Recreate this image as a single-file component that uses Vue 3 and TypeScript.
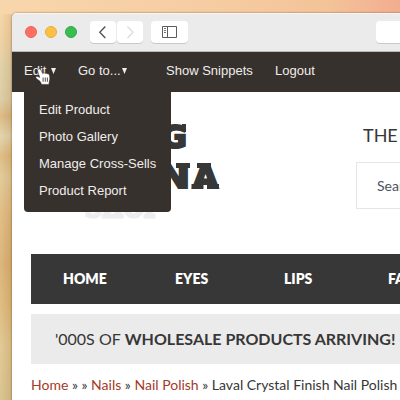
<script setup lang="ts">
interface NavItem { label: string; width: number }

const editMenu: string[] = ['Edit Product', 'Photo Gallery', 'Manage Cross-Sells', 'Product Report']
const nav: NavItem[] = [
  { label: 'HOME', width: 112 },
  { label: 'EYES', width: 109 },
  { label: 'LIPS', width: 104 },
  { label: 'FACE', width: 90 },
]
</script>

<template>
  <div class="desktop">
    <div class="window">
      <header class="chrome">
        <div class="lights">
          <i class="light red"></i><i class="light amber"></i><i class="light green"></i>
        </div>
        <div class="history">
          <button class="tool" aria-label="Back">
            <svg width="26" height="22" viewBox="0 0 26 22"><path d="M15.3 5.5 9.8 11.2l5.5 5.7" fill="none" stroke="#555" stroke-width="1.4" /></svg>
          </button>
          <button class="tool" aria-label="Forward">
            <svg width="26" height="22" viewBox="0 0 26 22"><path d="m10.5 5.5 5.5 5.7-5.5 5.7" fill="none" stroke="#ddd" stroke-width="1.4" /></svg>
          </button>
        </div>
        <button class="tool wide" aria-label="Sidebar">
          <svg width="37" height="22" viewBox="0 0 37 22"><path d="M11.5 5.5h14v11h-14zM16.5 5.5v11" fill="none" stroke="#5c5c5c" /><path d="M13 7.5h2M13 9.5h2M13 11.5h2" stroke="#777" /></svg>
        </button>
        <div class="address"></div>
      </header>

      <div class="admin">
        <a class="edit">Edit</a><span class="caret edit-caret"></span>
        <a class="goto">Go to...</a><span class="caret"></span>
        <a class="snippets">Show Snippets</a>
        <a class="logout">Logout</a>
        <ul class="menu">
          <li v-for="entry in editMenu" :key="entry">{{ entry }}</li>
        </ul>
      </div>

      <main class="page">
        <section class="masthead">
          <svg class="logo" width="150" height="115" viewBox="0 0 150 115">
            <g class="slab">
              <text x="91" y="35.6" textLength="26" lengthAdjust="spacingAndGlyphs">G</text>
              <text x="89" y="75.7" textLength="31" lengthAdjust="spacingAndGlyphs">N</text>
              <text x="123" y="75.7" textLength="25" lengthAdjust="spacingAndGlyphs">A</text>
              <text class="faint" x="15" y="105.2" textLength="76" lengthAdjust="spacingAndGlyphs">SHOP</text>
            </g>
            <path class="serifs" d="M112 12h4v8h-4zM106 51h14v5h-14zM127 51h14v5h-14zM121.500 72h12v5h-12zM137 72h12v5h-12z" />
          </svg>
          <div class="aside">
            <div class="tagline">THE</div>
            <div class="search">Search</div>
          </div>
        </section>
        <nav class="nav">
          <a v-for="item in nav" :key="item.label" :style="{ width: item.width + 'px' }">{{ item.label }}</a>
        </nav>
        <div class="banner"><span class="thin">'000S OF</span><b>WHOLESALE PRODUCTS ARRIVING!</b></div>
        <div class="crumbs"><a>Home</a> » » <a>Nails</a> » <a>Nail Polish</a> » Laval Crystal Finish Nail Polish</div>
      </main>
    </div>

    <svg class="pointer" width="17" height="18" viewBox="0 0 17 18">
      <path d="M3.7 1.1c1-.5 1.8.1 2.3 1.1l1.8 3.5.7-.6c.8-.5 1.5-.1 1.800.4.8-.6 1.600-.3 2 .4.9-.4 1.700 0 2 1 .6 2 .8 4 .1 6l-.5 3.500H6.700L5 13.200 1.400 10.500C.2 9.400 1.200 7.900 2.700 8.500l2 .9-2-6.300c-.3-.9.1-1.600 1-2z" fill="#fff" stroke="#26221f" stroke-width=".5" />
      <path d="M8.1 9.500v4.300M10.300 9.500v4.300M12.400 9.500v4.300" stroke="#26221f" stroke-width=".8" />
    </svg>
  </div>
</template>

<style>
body { overflow: hidden; }
</style>

<style scoped>
* { box-sizing: border-box; }
.desktop {
  position: relative; width: 400px; height: 400px; overflow: hidden; padding: 13px 0 0 12px;
  background:
    linear-gradient(90deg, #f8d6ab 0, #f6cda2 50%, #f4c398 82%, #f2ad90 100%) 0 0 / 400px 14px no-repeat,
    linear-gradient(90deg, rgba(255, 240, 200, .18) 0, rgba(150, 95, 40, .13) 12px) 0 14px / 12px 386px no-repeat,
    linear-gradient(180deg, #f8d6ab 0, #f0cfa0 8%, #dccda4 17%, #d8c89f 25%, #d6b27b 29%, #dfd0a9 34%, #d9b579 39%, #ddc594 44%, #dcb67b 53%, #d6ab6e 66%, #d9b474 76%, #dcc28c 87%, #d4bd89 100%);
}
.window { width: 388px; height: 387px; overflow: hidden; background: #fff; border-radius: 5px 0 0 0; box-shadow: 0 0 2px 0 rgba(80, 55, 30, .75); }
.chrome { display: flex; align-items: flex-start; height: 39px; padding: 7px 0 0 13px; background: #ebebeb; border-top: 1px solid #f8f6f4; border-bottom: 1px solid #bbb9b7; }
.chrome > * { flex: none; }
.lights { display: flex; gap: 8px; width: 65px; padding-top: 5px; }
.light { width: 12px; height: 12px; border-radius: 50%; border: 1px solid; }
.red { background: #fe6e62; border-color: #e96558; }
.amber { background: #fdc043; border-color: #e4ad42; }
.green { background: #36be51; border-color: #34a94b; }
.history { display: flex; gap: 1px; width: 61px; }
.tool { display: block; width: 26px; height: 22px; padding: 0; border: 0; border-radius: 4px; background: #fff; box-shadow: 0 1px 0 #c9c9c9; }
.tool svg { display: block; }
.tool.wide { width: 37px; }
.address { width: 60px; height: 22px; margin-left: 188px; border-radius: 4px; background: #fff; box-shadow: 0 1px 0 #c9c9c9; }
.admin { position: relative; display: flex; height: 40px; background: #37312d; color: #efedeb; font: 13px/38px "Liberation Sans", Arial, sans-serif; letter-spacing: .01px; white-space: nowrap; padding-left: 12px; }
.edit { width: 27px; }
.caret { width: 5px; height: 6px; margin-top: 16px; background: #efedeb; clip-path: polygon(0 0, 100% 0, 50% 100%); }
.edit-caret { margin-right: 22px; }
.goto { width: 44px; }
.snippets { width: 109px; margin-left: 39px; }
.menu { position: absolute; z-index: 2; left: 12px; top: 39px; width: 147px; height: 121px; margin: 0; padding: 5px 0 0 15px; list-style: none; background: #37312d; border-radius: 0 0 4px 4px; line-height: 27px; }
.page { font-family: Lato, sans-serif; color: #373737; padding-left: 19px; }
.masthead { display: flex; height: 162px; padding: 20px 0 0 39px; }
.logo { display: block; flex: none; }
.slab { font: bold 32px "DejaVu Sans", sans-serif; fill: #373737; stroke: #373737; stroke-width: 2.2px; stroke-linejoin: miter; stroke-miterlimit: 2; }
.slab .faint { font: bold 28px "DejaVu Serif", serif; fill: #ededed; stroke: #ededed; stroke-width: 3px; }
.serifs { fill: #373737; }
.aside { flex: none; width: 90px; margin-left: 136px; }
.tagline { height: 50px; padding-left: 7px; font-size: 18px; line-height: 46px; }
.search { height: 47px; padding-left: 20px; border: 1px solid #e6e6e6; color: #4b5361; font-size: 14px; line-height: 46px; }
.nav { display: flex; width: 415px; height: 50px; padding-left: 32px; background: #373737; color: #fff; font-size: 14px; font-weight: 800; line-height: 50px; }
.nav a { flex: none; }
.banner { display: flex; gap: 4px; height: 50px; margin-top: 10px; padding-left: 24px; background: #ebebeb; font-size: 16px; line-height: 50px; white-space: nowrap; }
.crumbs { margin-top: 11px; font-size: 14px; line-height: 20px; white-space: nowrap; }
.crumbs a { color: #a33b28; }
.pointer { position: absolute; left: 35px; top: 68px; }
</style>
